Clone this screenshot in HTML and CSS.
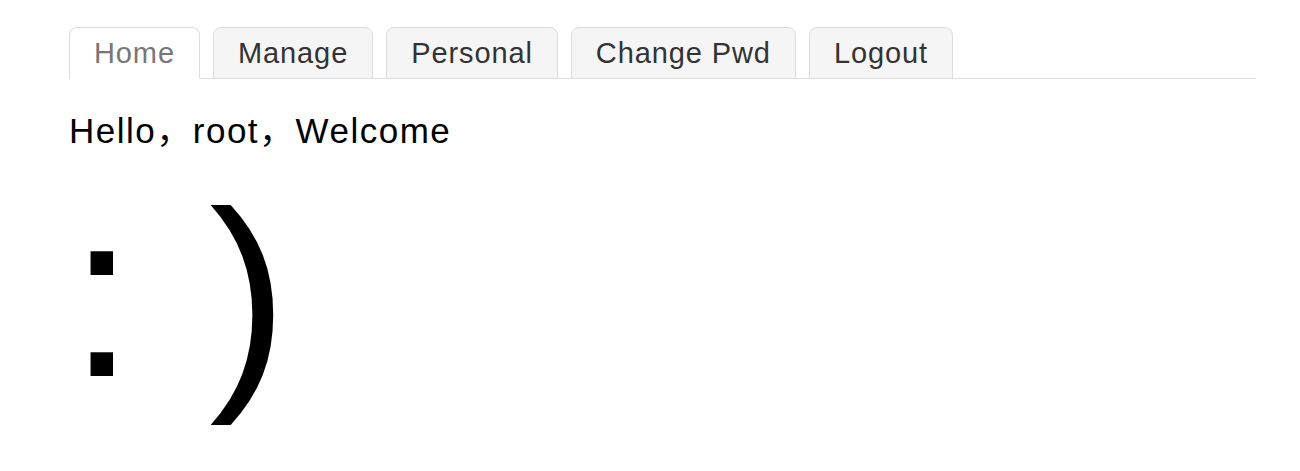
FILE: index.html
```html
<!DOCTYPE html>
<html lang="en">
<head>
  <meta charset="UTF-8">
  <title>Home</title>
  <link rel="stylesheet" href="styles.css">
</head>
<body>
  <div class="container">
    <ul class="tabs">
      <li class="tab active"><a href="#">Home</a></li>
      <li class="tab"><a href="#">Manage</a></li>
      <li class="tab"><a href="#">Personal</a></li>
      <li class="tab"><a href="#">Change Pwd</a></li>
      <li class="tab"><a href="#">Logout</a></li>
    </ul>

    <p class="greeting">Hello，root，Welcome</p>
    <h1 class="smile">: <span class="mouth">)</span></h1>
  </div>
</body>
</html>
```

FILE: styles.css
```css
body {
  margin: 0;
  font-family: "Liberation Sans", Arial, "Noto Sans CJK SC", sans-serif;
  color: #000;
  background: #fff;
}

.container {
  margin: 27px 44px 0 69px;
  padding-bottom: 20px;
}

.tabs {
  display: flex;
  gap: 13px;
  list-style: none;
  margin: 0;
  padding: 0;
  border-bottom: 1px solid #ddd;
}

.tab a {
  display: block;
  margin-bottom: -1px;
  padding: 8px 24px;
  line-height: 34px;
  font-size: 29px;
  letter-spacing: 0.9px;
  color: #333;
  text-decoration: none;
  background: #f5f5f5;
  border: 1px solid #ddd;
  border-radius: 8px 8px 0 0;
}

.tab.active a {
  color: #777;
  background: #fff;
  border-bottom-color: #fff;
}

.greeting {
  margin: 32px 0 0;
  font-size: 35px;
  line-height: 40px;
  letter-spacing: 1.5px;
  text-spacing-trim: space-all;
}

.smile {
  margin: 8px 0 0;
  font-size: 236px;
  font-weight: normal;
  line-height: 270px;
}

.mouth {
  margin-left: 9px;
}
```
